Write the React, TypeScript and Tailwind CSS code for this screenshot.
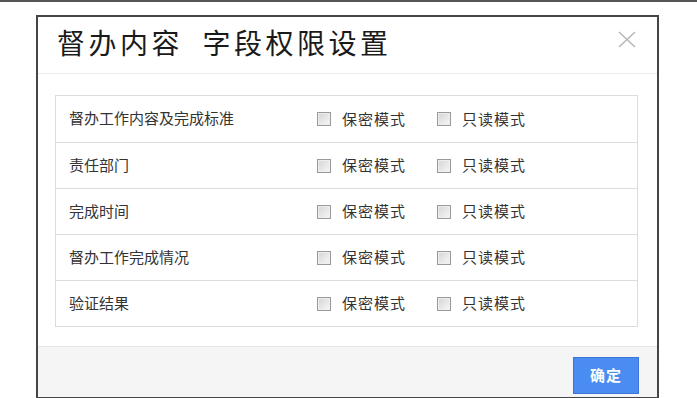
import React from 'react'

const FIELDS = ['督办工作内容及完成标准', '责任部门', '完成时间', '督办工作完成情况', '验证结果']

const FONT = { fontFamily: '"Noto Sans CJK SC", "Microsoft YaHei", sans-serif' }

function CheckBox({ label }: { label: string }) {
  return (
    <label className="flex items-center w-[120px] text-[15px] leading-none text-[#333]">
      <span className="w-[14px] h-[14px] border border-[#9a9a9a] bg-linear-to-br from-[#d6d6d6] to-[#f6f6f6] shadow-[inset_0_0_0_1px_#eeeeee] shrink-0" />
      <span className="ml-[11px] tracking-[1px] -mt-[2px]">{label}</span>
    </label>
  )
}

export default function App() {
  return (
    <div className="w-[697px] h-[398px] bg-white border-t-2 border-[#555] overflow-hidden" style={FONT}>
      <div className="ml-[36px] mt-[13px] w-[623px] h-[384px] border-2 border-[#454545] flex flex-col bg-white">
        {/* Header */}
        <div className="h-[57px] shrink-0 flex items-center justify-between pl-[19px] pr-[20px] border-b border-[#ebebeb]">
          <h1 className="text-[28px] leading-none text-[#1a1a1a] tracking-[3.5px] -mt-[6px]">
            督办内容&nbsp;&nbsp;字段权限设置
          </h1>
          <button className="w-[20px] h-[20px] flex items-center justify-center -mt-[12px]">
            <svg width="18" height="17" viewBox="0 0 18 17" fill="none" stroke="#b4b4b4" strokeWidth="1.4">
              <path d="M1 1 L17 16 M17 1 L1 16" />
            </svg>
          </button>
        </div>

        {/* Body */}
        <div className="flex-1 pt-[21px] pl-[17px] pr-[19px]">
          <div className="border border-[#dcdcdc]">
            {FIELDS.map((f, i) => (
              <div
                key={f}
                className={`h-[46px] flex items-center ${i > 0 ? 'border-t border-[#dcdcdc]' : ''}`}
              >
                <span className="w-[261px] pl-[13px] text-[15px] leading-none text-[#333] shrink-0 -mt-[3px]">{f}</span>
                <CheckBox label="保密模式" />
                <CheckBox label="只读模式" />
              </div>
            ))}
          </div>
        </div>

        {/* Footer */}
        <div className="h-[51px] shrink-0 bg-[#f5f5f5] border-t border-[#e6e6e6] flex justify-end pr-[18px] pt-[10px]">
          <button className="w-[66px] h-[37px] bg-[#4a8cf2] border border-[#3b74d6] text-white text-[15px] font-bold tracking-[1px]">
            确定
          </button>
        </div>
      </div>
    </div>
  )
}
